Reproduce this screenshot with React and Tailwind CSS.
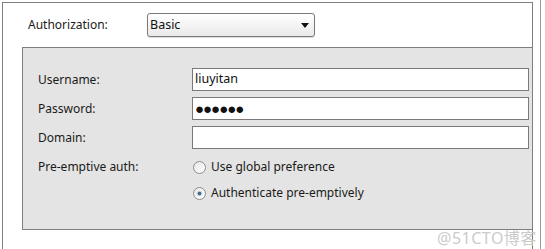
const Radio = ({ checked }) => (
  <svg width="13" height="13" viewBox="0 0 13 13" className="shrink-0">
    <defs>
      <linearGradient id={checked ? "rg1" : "rg0"} x1="0" y1="0" x2="1" y2="1">
        <stop offset="0" stopColor="#e6e6e6" />
        <stop offset="1" stopColor="#ffffff" />
      </linearGradient>
    </defs>
    <circle cx="6.5" cy="6.5" r="6" fill={`url(#${checked ? "rg1" : "rg0"})`} stroke="#8c8c8c" strokeWidth="1" />
    {checked && (
      <>
        <circle cx="6.5" cy="6.5" r="3" fill="#e8eef5" />
        <circle cx="6.5" cy="6.5" r="2" fill="#4a6a8c" />
      </>
    )}
  </svg>
);

const Field = ({ children }) => (
  <div className="w-[337px] h-[23px] border border-[#7a7a7a] bg-white flex items-center pl-[2px] text-[12.5px] text-[#111]">
    {children}
  </div>
);

export default function App() {
  return (
    <div
      className="relative w-[545px] h-[249px] bg-white overflow-hidden text-[12px] text-[#1a1a1a]"
      style={{ fontFamily: '"Noto Sans", "Open Sans", sans-serif' }}
    >
      <div className="flex h-full">
        <div className="ml-[2px] mt-[2px] w-[531px] border-l border-t border-r border-[#7f7f7f] flex flex-col">
          <div className="flex items-center h-[24px] mt-[10px] pl-[25px]">
            <span className="w-[119px]">Authorization:</span>
            <div className="w-[168px] h-[24px] border border-[#7a7a7a] rounded-[3px] bg-gradient-to-b from-white to-[#e9e9e9] flex items-center justify-between pl-[2px] pr-[5px] shadow-[0_1px_1px_rgba(0,0,0,0.15)]">
              <span className="text-[12.5px] text-[#111]">Basic</span>
              <svg width="8" height="5" viewBox="0 0 8 5">
                <path d="M0 0 L8 0 L4 5 Z" fill="#111" />
              </svg>
            </div>
          </div>
          <div className="ml-[19px] mt-[10px] h-[183px] border-l border-t border-b border-[#7f7f7f] bg-[#e4e4e4] pt-[20px] pl-[15px] flex flex-col gap-[6px]">
            <div className="flex items-center">
              <span className="w-[154px]">Username:</span>
              <Field>liuyitan</Field>
            </div>
            <div className="flex items-center">
              <span className="w-[154px]">Password:</span>
              <Field>
                <span className="text-[15px] leading-none tracking-[-1px]">●●●●●●</span>
              </Field>
            </div>
            <div className="flex items-center">
              <span className="w-[154px]">Domain:</span>
              <Field></Field>
            </div>
            <div className="flex mt-[3px]">
              <span className="w-[155px] leading-[18px]">Pre-emptive auth:</span>
              <div className="flex flex-col gap-[8px]">
                <div className="flex items-center gap-[5px] h-[18px]">
                  <Radio />
                  <span>Use global preference</span>
                </div>
                <div className="flex items-center gap-[5px] h-[18px]">
                  <Radio checked />
                  <span>Authenticate pre-emptively</span>
                </div>
              </div>
            </div>
          </div>
        </div>
        <div className="ml-[7px] w-px h-full bg-[#9a9a9a]" />
      </div>
      <span
        className="absolute left-[437px] top-[226px] text-[16px] tracking-[0.5px] text-[#cbcbcb]"
        style={{ fontFamily: '"Noto Sans", "Noto Sans CJK SC", sans-serif' }}
      >
        @51CTO博客
      </span>
    </div>
  );
}
